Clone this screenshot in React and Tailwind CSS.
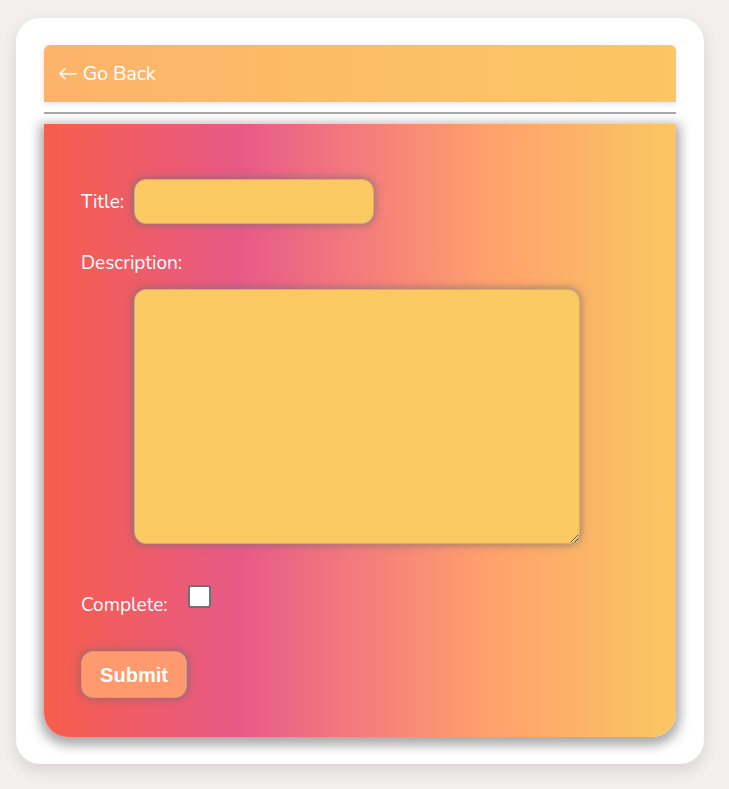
import React from 'react'

const glow = 'shadow-[0_0_7px_2px_rgba(110,110,110,0.55)]'

const App = () => {
  return (
    <div className="min-h-screen bg-[#f3efef] pt-[18px] pl-4 pb-6" style={{ fontFamily: 'Nunito, Lato, "Noto Sans", sans-serif' }}>
      <div className="w-[688px] bg-white rounded-3xl shadow-[0_6px_16px_rgba(0,0,0,0.12)] px-7 pt-[27px] pb-[27px]">
        {/* header */}
        <div className="h-[57px] rounded-t-md bg-gradient-to-r from-[#fdb36a] to-[#fbc762] shadow-[0_2px_6px_rgba(0,0,0,0.12)] flex items-center pl-[14px]">
          <a href="#" className="text-white text-[20px] tracking-[-0.2px]">← Go Back</a>
        </div>

        <hr className="mt-[10px] border-0 border-t-2 border-[#a8a8a8]" />

        {/* form card */}
        <form
          className="mt-[10px] h-[613px] rounded-b-3xl shadow-[0_4px_12px_4px_rgba(0,0,0,0.35)] pl-[37px] pt-[55px] text-white text-[19px] leading-[26px] bg-[linear-gradient(to_right,#f65e4b_0%,#e75a88_31%,#f47c7c_50%,#fea06c_70%,#fac762_100%)]"
          onSubmit={(e) => e.preventDefault()}
        >
          <div className="flex items-center gap-[10px]">
            <label>Title:</label>
            <input type="text" className={`w-[240px] h-[45px] rounded-xl bg-[#fbc962] border border-[#c4b08a] outline-none ${glow}`} />
          </div>

          <div className="mt-[26px]">
            <label className="block">Description:</label>
            <textarea className={`block mt-[13px] ml-[53px] w-[446px] h-[255px] rounded-xl bg-[#fbc962] border border-[#c4b08a] outline-none ${glow}`} />
          </div>

          <div className="mt-[41px] flex items-start gap-[20px]">
            <label className="mt-[7px]">Complete:</label>
            <input type="checkbox" className="appearance-none w-[23px] h-[23px] bg-white border-2 border-[#707070] rounded-[3px]" />
          </div>

          <button
            type="submit"
            className={`mt-[33px] w-[106px] h-[47px] rounded-xl bg-[#fe9a6e] text-white text-[20px] font-bold border border-[#c9a090] ${glow}`}
            style={{ fontFamily: '"Liberation Sans", Arial, sans-serif' }}
          >
            Submit
          </button>
        </form>
      </div>
    </div>
  )
}

export default App
